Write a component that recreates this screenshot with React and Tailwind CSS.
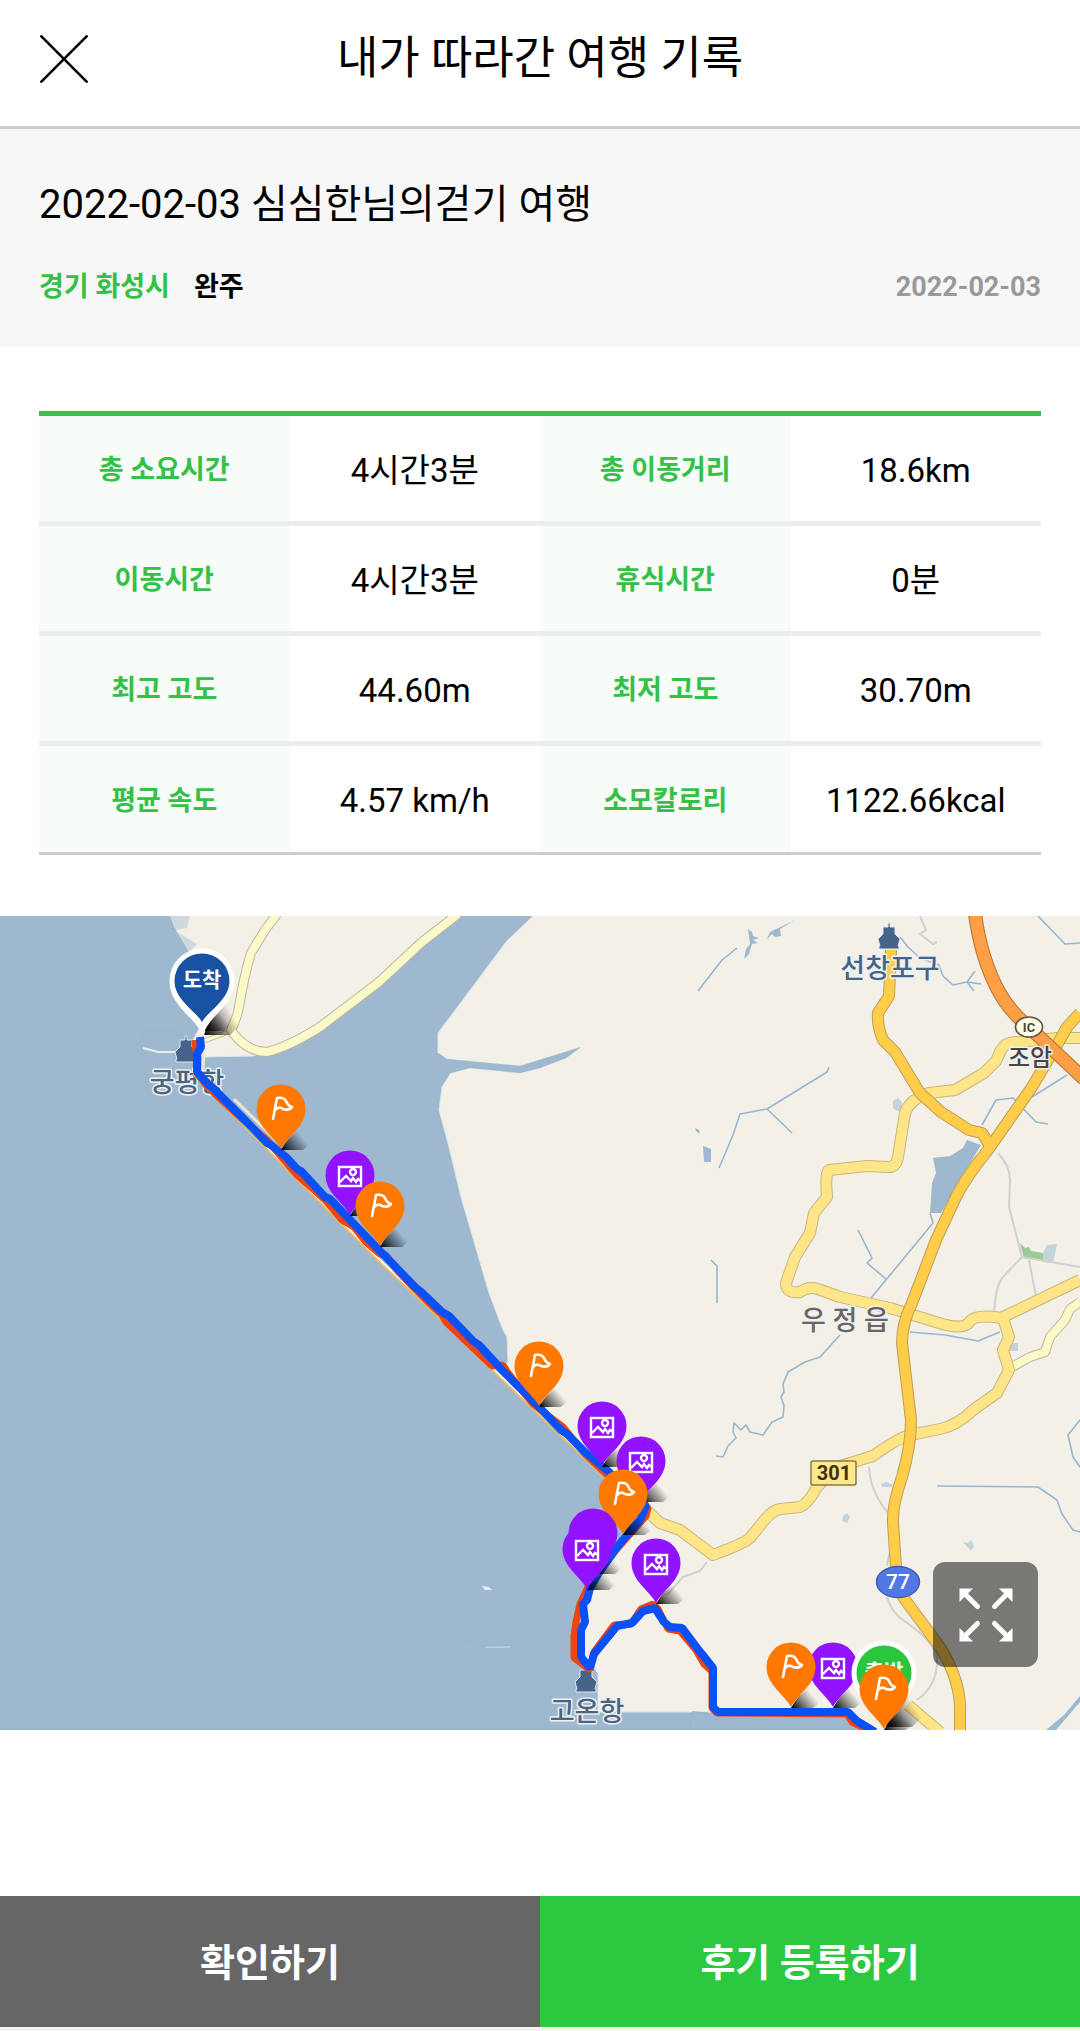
import React from "react";

const ROWS = [
  [["총 소요시간", "4시간3분"], ["총 이동거리", "18.6km"]],
  [["이동시간", "4시간3분"], ["휴식시간", "0분"]],
  [["최고 고도", "44.60m"], ["최저 고도", "30.70m"]],
  [["평균 속도", "4.57 km/h"], ["소모칼로리", "1122.66kcal"]],
];

const ROUTE =
  "M200 121 L201 131 197 138 197 156 208 168 212 171 241 200 267 227 271 229 286 241 297 253 301 255 325 281 330 283 355 309 382 337 386 341 415 371 420 375 442 396 449 400 473 425 479 429 503 455 508 460 533 485 538 490 561 514 567 518 585 536 608 555 630 577 646 590 640 604 617 631 600 655 590 672 587 684 583 688 585 706 581 714 581 741 590 752 594 738 617 710 632 707 643 695 655 692 664 706 670 711 682 712 697 732 702 738 713 752 713 791 718 796 848 796 857 805 875 816";

const ROUTE_SHADE =
  "M195 124 L196 134 197 140 197 157 206 169 211 173 215 178 240 201 268 225 284 244 296 258 312 272 326 285 342 304 354 311 366 326 380 338 386 339 397 354 415 373 430 388 442 399 446 406 471 430 492 450 503 449 508 457 533 488 563 511 585 538 605 557 630 577 648 592 646 600 617 633 588 671 580 688 576 706 574 720 574 742 581 747 590 754 594 736 614 709 631 708 641 693 653 688 658 693 668 713 680 715 696 734 704 748 712 755 712 792 717 797 847 798 852 806 868 814";

const LIGHT_ROADS = [
  "M1080 122 L1057 122 1019 126 Q1006 125 1001 134 L996 145 984 157 955 174 929 177 Q910 183 905 197 L898 241 Q896 252 887 251 L867 250 829 254 Q825 256 827 281 L814 297 810 317 795 341 786 367 Q786 378 800 376 Q808 370 818 373 L840 381 890 392 939 407 Q965 415 970 405 Q977 398 1001 402 L1080 364",
  "M1003 402 L1009 421 1003 434 1009 454 997 477 973 494 Q958 509 940 513 L910 519 Q898 522 873 540 L837 551 817 571 Q808 588 800 591 L780 593 Q772 594 763 606 L750 622 Q745 627 713 639 L680 614 660 607 646 594",
  "M908 789 L940 816",
];
const PALE_ROADS = [
  "M277 -2 L265 14 251 37 Q244 60 239 91 Q237 102 231 114 Q246 136 267 136 Q290 130 320 111 L379 66 422 26 458 -2",
  "M1012 451 L1030 441 1045 436 1050 421 1065 404 1070 393 1080 386",
];
const MAIN_ROADS = [
  "M891 34 L889 80 878 97 Q877 110 883 124 L895 136 920 177 941 196 969 214 982 217 990 230",
  "M1080 97 L1067 111 1057 129 1032 171 988 234 Q966 261 956 281 L936 324 912 387 Q902 407 902 427 L911 504 Q911 530 902 561 Q892 590 893 607 L896 651 903 681 940 731 Q959 762 960 790 L960 816",
];
const STREAMS = [
  "M698 75 L722 44 737 32",
  "M719 252 L733 219 740 198 767 193 827 156 829 151 M767 193 L792 217",
  "M711 344 L717 350 717 387",
  "M858 314 L872 342 867 347 886 363",
  "M930 297 L933 307 871 382",
  "M982 209 L996 184 1013 182 1036 206 1048 208 M1032 181 L1067 159",
  "M1038 0 L1065 28 1080 27",
  "M900 21 L908 31 920 42 939 49 943 60 953 69 967 66 981 68 M967 66 L975 55 M967 66 L974 75",
  "M840 419 L820 441 805 446 788 456 783 468 784 476 781 481 784 490 783 501 772 506 763 519 750 516 746 509 741 514 734 507 733 516 736 522 728 530 723 541 716 540",
  "M910 416 L945 419 978 425 1000 416",
  "M937 570 L1038 571 1057 584 1062 598 1073 614 1080 616",
  "M1080 504 L1068 519 1073 541 1080 551",
  "M139 122 L146 114 169 114 186 122",
  "M485 472 L498 459 M487 465 L493 472",
  "M467 724 L477 730 517 729",
  "M162 17 L172 12 176 14",
  "M692 796 L708 797 M692 796 L690 812",
];
const LANES = [
  "M920 0 L926 14 920 18 933 28 937 26",
  "M998 237 Q1010 250 1010 264 L1009 291 1022 341 1003 361 Q995 370 994 400 M1022 341 L1080 351 M1029 344 L1036 381",
  "M869 551 Q870 575 888 597 L891 630 887 650 M887 681 Q892 697 903 704 Q937 727 937 745 Q937 770 917 784",
  "M707 646 L700 655 683 661 667 679",
];

function Roads({ paths, casing, fill, width }) {
  return (
    <>
      {paths.map((d) => (
        <path key={d} d={d} stroke={casing} strokeWidth={width + 2} />
      ))}
      {paths.map((d) => (
        <path key={d} d={d} stroke={fill} strokeWidth={width} />
      ))}
    </>
  );
}

function Pin({ x, y, kind }) {
  return (
    <g transform={`translate(${x} ${y})`}>
      <path d="M0 41 Q6 29 18 21 Q30 26 28 36 L22 41Z" fill="url(#pinShadow)" />
      <path
        d="M0 40 C-6 28 -24.5 18 -24.5 0 A24.5 24.5 0 0 1 24.5 0 C24.5 18 6 28 0 40Z"
        fill={kind === "flag" ? "#ff7900" : "#9213ff"}
      />
      {kind === "flag" && (
        <path
          d="M-8 10 L-4 -11 Q3 -12 5 -8 Q7 -3 11 -2 Q8 2 2 0 Q-2 -3 -6 1"
          fill="none"
          stroke="#fff"
          strokeWidth="2.6"
          strokeLinecap="round"
          strokeLinejoin="round"
        />
      )}
      {kind === "photo" && (
        <g fill="none" stroke="#fff" strokeWidth="2.4">
          <rect x="-11" y="-8" width="22" height="19" />
          <circle cx="3" cy="-3" r="3" />
          <path d="M-10 7 L-4 1 1 6 3 3 6 7 8 4 11 6" />
        </g>
      )}
    </g>
  );
}

function EndPin({ x, y, color, label }) {
  return (
    <g transform={`translate(${x} ${y})`}>
      <path d="M2 54 Q8 34 24 20 Q38 28 38 44 L28 54Z" fill="url(#pinShadow)" />
      <path d="M-2 56 L-2 50 C-8 36 -32.5 24 -32.5 0 A32.5 32.5 0 0 1 32.5 0 C32.5 24 6 36 2 52Z" fill="#fff" />
      <path d="M0 41 C-6 30 -27.5 19 -27.5 0 A27.5 27.5 0 0 1 27.5 0 C27.5 19 6 30 0 41Z" fill={color} />
      <text y="6" textAnchor="middle" fontSize="21" fontWeight="700" fill="#fff">
        {label}
      </text>
    </g>
  );
}

function Harbor({ x, y }) {
  return (
    <path
      transform={`translate(${x} ${y})`}
      d="M-1 -14 h2 v4 h5 v7 L11 2 9 9 h1 v3 h-20 v-3 h1 L-11 2 -6 -3 v-7 h5Z"
      fill="#46648a"
      stroke="#dfe7ee"
      strokeWidth="1"
    />
  );
}

function PlaceName({ x, y, color, children, size = 27 }) {
  return (
    <text
      x={x}
      y={y}
      textAnchor="middle"
      fontSize={size}
      fontWeight="500"
      fill={color}
      stroke="#eef1f2"
      strokeWidth="3"
      strokeLinejoin="round"
      paintOrder="stroke"
    >
      {children}
    </text>
  );
}

function TrailMap() {
  return (
    <svg
      viewBox="0 0 1080 814"
      className="block h-auto w-full font-[Roboto,'Noto_Sans_CJK_KR',sans-serif]"
      role="img"
      aria-label="여행 경로 지도"
    >
      <defs>
        <linearGradient id="pinShadow" x1="0" y1="1" x2="1" y2="0.4">
          <stop offset="0" stopColor="#000" />
          <stop offset="0.4" stopColor="#000" stopOpacity="0.5" />
          <stop offset="0.85" stopColor="#000" stopOpacity="0" />
        </linearGradient>
      </defs>
      <rect width="1080" height="814" fill="#9eb9cf" />

      <g fill="#f3f0e8" stroke="#dce5ea" strokeWidth="1">
        <path d="M170 -2 L176 14 189 34 200 111 193 124 203 141 253 140 300 126 331 107 385 64 425 27 462 -2Z" />
        <path d="M535 -2 L506 26 465 81 438 117 438 137 447 143 520 150 581 131 566 142 540 152 520 157 470 152 451 157 442 171 439 194 448 227 461 281 489 377 503 414 507 421 508 446 500 452 535 487 565 517 612 560 646 592 587 671 580 687 582 737 598 757 598 796 712 796 850 796 870 816 1082 816 1082 -2Z" />
      </g>
      <path d="M438 137 L447 143 520 150 581 131 566 142 540 152 520 157 470 152 451 157 436 165Z" fill="#9eb9cf" />
      <path d="M170 0 H190 L187 12 176 14Z M177 16 L197 28 189 36Z" fill="#cdd8df" />
      <path d="M143 132 L158 136 177 136" fill="none" stroke="#e8edf0" strokeWidth="2" />

      <g fill="#9eb9cf">
        <path d="M967 224 L981 229 962 261 951 281 941 297 930 297 932 267 936 257 933 242 950 240 963 232Z" />
        <path d="M703 230 L711 233 V246 H704Z" />
        <path d="M695 212 l4 2 1 4 -4 -3Z" />
        <path d="M748 13 L752 16 753 20 759 22 753 24 758 27 752 28 749 38 744 43 746 33 750 28Z" />
        <path d="M767 23 L770 16 795 4 780 13 781 20 775 21 772 18Z" />
        <path d="M1046 814 L1064 799 1080 780 V786 L1056 814Z" />
      </g>
      <g fill="#c5d3dc">
        <path d="M1043 337 L1047 329 1057 328 1053 347 1043 346Z" />
        <path d="M893 185 l5 -3 4 4 0 8 -5 1 -4 -3Z" />
        <path d="M843 600 l4 -3 3 4 -3 6 -5 -2Z M963 626 l5 1 3 -3 3 6 -3 5Z M1009 427 h9 v8 h-9Z M881 568 l5 -2 7 3 -1 2 -10 0Z" />
      </g>
      <path d="M1020 327 L1025 332 1029 331 1031 335 1043 337 V345 L1024 342Z" fill="#99cb93" />
      <path d="M482 670 l7 1 3 3 -7 0Z" fill="#e8edf0" />
      <path d="M485 731 L510 731" stroke="#d6e1e8" strokeWidth="1" />

      <g fill="none" strokeLinejoin="round">
        {LANES.map((d) => (
          <path key={d} d={d} stroke="#d2d0cc" strokeWidth="2" />
        ))}
        {STREAMS.map((d) => (
          <path key={d} d={d} stroke="#98b6d0" strokeWidth="1.6" />
        ))}
        <Roads paths={["M231 115 L204 125"]} casing="#b9b8a0" fill="#fcf9c9" width={3} />
        <Roads paths={PALE_ROADS} casing="#b9b8a0" fill="#fcf9c9" width={8} />
        <Roads paths={LIGHT_ROADS} casing="#c9b67c" fill="#fee688" width={10} />
        <Roads paths={MAIN_ROADS} casing="#bf9d55" fill="#ffcd4a" width={10} />
        <Roads
          paths={["M975 -2 Q981 42 998 74 Q1009 95 1031 113 L1084 163"]}
          casing="#b0713a"
          fill="#ff9f45"
          width={12}
        />
      </g>

      <ellipse cx="1029" cy="111" rx="13.5" ry="10" fill="#fffde6" stroke="#5c5343" strokeWidth="1.6" />
      <text x="1029" y="116" textAnchor="middle" fontSize="13" fontWeight="700" fill="#4b463c">IC</text>
      <rect x="811" y="545" width="45" height="24" rx="2" fill="#fee88b" stroke="#8a7a48" strokeWidth="1.5" />
      <text x="834" y="564" textAnchor="middle" fontSize="20" fontWeight="700" fill="#3d3212">301</text>
      <ellipse cx="898" cy="666" rx="21.5" ry="15.5" fill="#5077e4" stroke="#3c5cae" strokeWidth="1.4" />
      <text x="898" y="673" textAnchor="middle" fontSize="21" fontWeight="500" fill="#fff">77</text>

      <Harbor x={889} y={21} />
      <Harbor x={186} y={134} />
      <Harbor x={586} y={764} />
      <PlaceName x={890} y={62} color="#46648a">선창포구</PlaceName>
      <PlaceName x={187} y={176} color="#4b6480">궁평항</PlaceName>
      <PlaceName x={587} y={805} color="#4b6480">고온항</PlaceName>
      <PlaceName x={1030} y={150} color="#4a4541" size={24}>조암</PlaceName>
      <PlaceName x={845} y={414} color="#6d645f">우 정 읍</PlaceName>

      <g fill="none" strokeLinejoin="bevel">
        <path d="M204 134 L203 154 M234 183 L277 225" stroke="#eee6d2" strokeWidth="3" />
        <path d="M193 158 L290 257 378 345 446 409 480 443 530 491 606 563" stroke="#e0b970" strokeWidth="2" />
        <path d="M195 158 L292 256 380 344 448 408 482 442 532 490 608 562" stroke="#fff3dc" strokeWidth="2" />
        <path d={ROUTE_SHADE} stroke="#ee4312" strokeWidth="7" />
        <path d={ROUTE} stroke="#0950f6" strokeWidth="8" />
      </g>

      <Pin x={202} y={74} kind="plain" />
      <EndPin x={202} y={65} color="#1852a3" label="도착" />
      <Pin x={281} y={193} kind="flag" />
      <Pin x={350} y={259} kind="photo" />
      <Pin x={380} y={290} kind="flag" />
      <Pin x={539} y={450} kind="flag" />
      <Pin x={602} y={510} kind="photo" />
      <Pin x={641} y={545} kind="photo" />
      <Pin x={623} y={578} kind="flag" />
      <Pin x={593} y={617} kind="plain" />
      <Pin x={587} y={633} kind="photo" />
      <Pin x={656} y={647} kind="photo" />
      <Pin x={833} y={751} kind="photo" />
      <Pin x={791} y={751} kind="flag" />
      <EndPin x={884} y={757} color="#2cc63e" label="출발" />
      <Pin x={884} y={773} kind="flag" />
    </svg>
  );
}

function ExpandIcon() {
  return (
    <svg viewBox="0 0 54 54" className="size-[54px]" aria-hidden="true">
      {[0, 90, 180, 270].map((a) => (
        <g key={a} transform={`rotate(${a} 27 27)`}>
          <path d="M0.5 0.5 H14 L0.5 14Z" fill="#fff" />
          <path d="M5 5 L18.5 18.5" stroke="#fff" strokeWidth="5" strokeLinecap="round" />
        </g>
      ))}
    </svg>
  );
}

export default function App() {
  return (
    <div className="flex min-h-screen flex-col bg-white font-[Roboto,'Noto_Sans_CJK_KR',sans-serif] text-black">
      <header className="grid grid-cols-[1fr_auto_1fr] items-center border-b-3 border-[#cccccc] px-10 pt-7 pb-9">
        <button type="button" aria-label="닫기" className="size-12 cursor-pointer">
          <svg viewBox="0 0 48 48" className="size-12" aria-hidden="true">
            <path d="M0.5 0.5 L47.5 47.5 M47.5 0.5 L0.5 47.5" stroke="#000" strokeWidth="2.6" />
          </svg>
        </button>
        <h1 className="text-[45px] leading-[62px]">내가 따라간 여행 기록</h1>
      </header>

      <section className="bg-[#f7f7f7] px-[39px] pt-[46px] pb-10">
        <h2 className="text-[40px] leading-[60px]">2022-02-03 심심한님의걷기 여행</h2>
        <div className="mt-8 flex items-center justify-between text-[27px] leading-[40px] font-bold">
          <p className="flex gap-6">
            <span className="text-[#35c148]">경기 화성시</span>
            <span>완주</span>
          </p>
          <time dateTime="2022-02-03" className="text-[#999999]">2022-02-03</time>
        </div>
      </section>

      <div className="px-[39px] pt-16 pb-[61px]">
        <table className="w-full table-fixed border-collapse border-t-5 border-b-3 border-t-[#3ac24a] border-b-[#cccccc] text-center">
          <tbody className="divide-y-5 divide-[#ededed]">
            {ROWS.map((row) => (
              <tr key={row[0][0]} className="h-[110px]">
                {row.map(([label, value]) => (
                  <React.Fragment key={label}>
                    <th scope="row" className="bg-[#f7fcf8] pt-1 text-[27px] font-bold text-[#35c148]">{label}</th>
                    <td className="pt-1 text-[33px] whitespace-nowrap">{value}</td>
                  </React.Fragment>
                ))}
              </tr>
            ))}
          </tbody>
        </table>
      </div>

      <section className="relative">
        <TrailMap />
        <button
          type="button"
          aria-label="지도 확대"
          className="absolute right-[42px] bottom-[63px] flex size-[105px] cursor-pointer items-center justify-center rounded-xl bg-black/50"
        >
          <ExpandIcon />
        </button>
      </section>

      <footer className="mt-auto grid grid-cols-2 border-b-4 border-[#f2f2f2] pt-16 text-[38px] font-bold text-white">
        <button type="button" className="h-[131px] cursor-pointer bg-[#666666] pt-1">확인하기</button>
        <button type="button" className="h-[131px] cursor-pointer bg-[#2cc83f] pt-1">후기 등록하기</button>
      </footer>
    </div>
  );
}
